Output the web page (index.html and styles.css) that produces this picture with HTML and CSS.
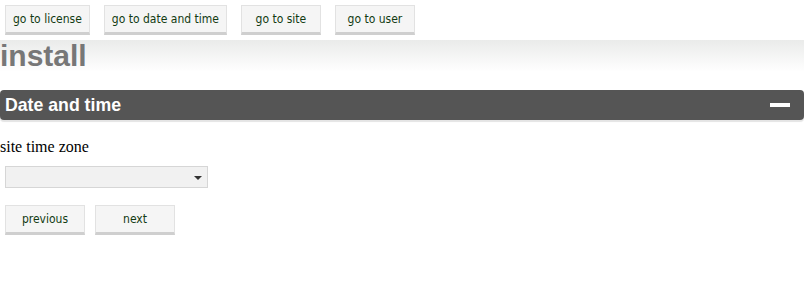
FILE: index.html
```html
<!DOCTYPE html>
<html lang="en">

<head>
    <meta charset="UTF-8">
    <meta name="viewport" content="width=device-width, initial-scale=1.0">
    <title>install</title>
    <link rel="stylesheet" href="styles.css">
</head>

<body>
    <!-- 顶部导航按钮 -->
    <div class="nav">
        <input type="button" class="btn" value="go to license">
        <input type="button" class="btn" value="go to date and time">
        <input type="button" class="btn" value="go to site">
        <input type="button" class="btn" value="go to user">
    </div>

    <!-- 标题 -->
    <div class="head">
        <h1>install</h1>
    </div>

    <!-- 日期和时间 -->
    <div class="section">
        <div class="bar">
            <h2>Date and time</h2>
            <span class="toggle"></span>
        </div>
        <div class="content">
            <p class="label">site time zone</p>
            <div class="select">
                <span class="arrow"></span>
            </div>
            <div class="actions">
                <input type="button" class="btn" value="previous">
                <input type="button" class="btn" value="next">
            </div>
        </div>
    </div>
</body>

</html>
```

FILE: styles.css
```css
* {
    margin: 0;
    padding: 0;
    box-sizing: border-box;
}

body {
    font-family: "Liberation Serif", serif;
    font-size: 16px;
    color: #000;
    background: #fff;
}

.btn {
    min-width: 80px;
    height: 30px;
    padding: 0 7px;
    border: 1px solid #e2e2e2;
    border-bottom: 3px solid #cfcfcf;
    background: #f5f5f5;
    color: #123b12;
    font-family: "DejaVu Sans", sans-serif;
    font-stretch: condensed;
    font-size: 12px;
    text-align: center;
}

.nav {
    display: flex;
    gap: 14px;
    padding: 5px;
}

.head {
    height: 32px;
    background: linear-gradient(#eaebea, #ffffff);
}

.head h1 {
    font-family: "Liberation Sans", Arial, sans-serif;
    font-size: 30px;
    line-height: 31px;
    color: #777;
}

.section {
    margin-top: 18px;
}

.bar {
    display: flex;
    align-items: center;
    justify-content: space-between;
    height: 30px;
    padding: 0 14px 0 5px;
    background: #555;
    border-radius: 4px;
    box-shadow: 0 2px 1px #e4e4e4;
}

.bar h2 {
    font-family: "Liberation Sans", Arial, sans-serif;
    font-size: 17.7px;
    color: #fff;
}

.toggle {
    width: 20px;
    height: 4px;
    background: #fff;
}

.content {
    padding-top: 17px;
}

.label {
    line-height: 20px;
}

.select {
    position: relative;
    width: 203px;
    height: 22px;
    margin: 9px 0 0 5px;
    border: 1px solid #d6d6d6;
    background: #f1f1f1;
}

.select .arrow {
    position: absolute;
    right: 5px;
    top: 9px;
    border-left: 4px solid transparent;
    border-right: 4px solid transparent;
    border-top: 4px solid #333;
}

.actions {
    display: flex;
    gap: 10px;
    padding: 17px 5px;
}
```
